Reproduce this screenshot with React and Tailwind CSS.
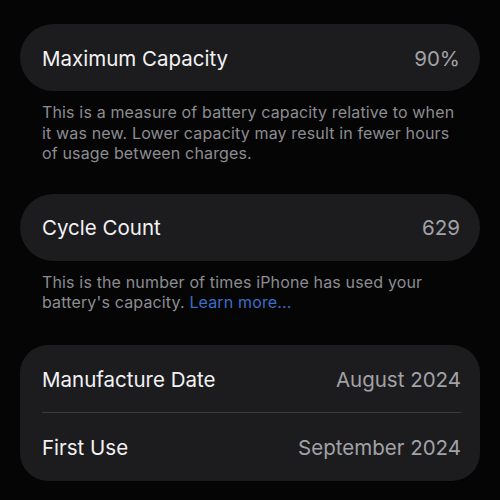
export default function App() {
    return (
        <div className="w-[500px] h-[500px] overflow-hidden bg-[#050505] px-5 pt-6 text-[#f2f2f4]" style={{ fontFamily: 'Inter, "Noto Sans", sans-serif' }}>
            <div className="flex h-[67px] items-center justify-between rounded-[34px] bg-[#1c1c1e] pl-[22px] pr-[20px] pt-[4px]">
                <span className="text-[20.5px]">Maximum Capacity</span>
                <span className="text-[20.5px] text-[#a2a2a7]">90%</span>
            </div>
            <p className="mt-[11px] px-[22px] text-[16px] leading-[20.5px] tracking-[0.15px] text-[#8c8c92]">
                This is a measure of battery capacity relative to when it was new. Lower capacity may result in fewer hours of usage between charges.
            </p>

            <div className="mt-[30px] flex h-[67px] items-center justify-between rounded-[34px] bg-[#1c1c1e] pl-[22px] pr-[20px] pt-[3px]">
                <span className="text-[20.5px]">Cycle Count</span>
                <span className="text-[20.5px] text-[#a2a2a7]">629</span>
            </div>
            <p className="mt-[11px] px-[22px] text-[16px] leading-[20.5px] tracking-[0.15px] text-[#8c8c92]">
                This is the number of times iPhone has used your battery's capacity. <span className="text-[#3a6ec8]">Learn more...</span>
            </p>

            <div className="mt-[32px] rounded-[28px] bg-[#1c1c1e] pl-[22px]">
                <div className="flex h-[67px] items-center justify-between pr-[19px] pt-[4px]">
                    <span className="text-[20.5px]">Manufacture Date</span>
                    <span className="text-[20.5px] text-[#a2a2a7]">August 2024</span>
                </div>
                <div className="mr-[19px] h-px bg-[#3a3a3d]"></div>
                <div className="flex h-[68px] items-center justify-between pr-[19px] pt-[3px]">
                    <span className="text-[20.5px]">First Use</span>
                    <span className="text-[20.5px] text-[#a2a2a7]">September 2024</span>
                </div>
            </div>
        </div>
    );
}
